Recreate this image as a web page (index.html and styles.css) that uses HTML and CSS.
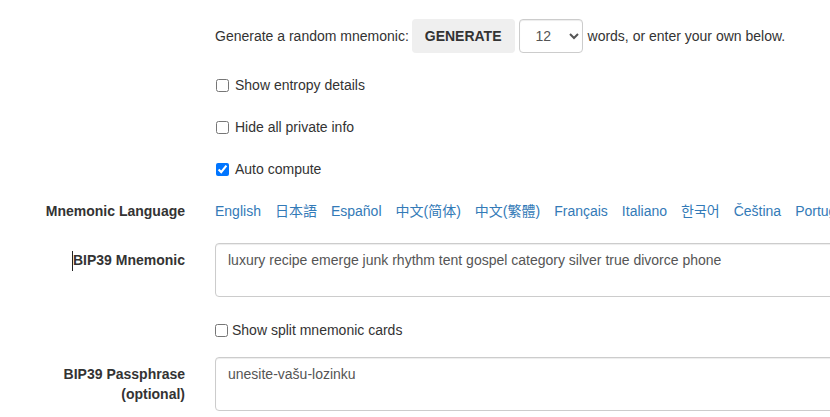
FILE: index.html
```html
<!DOCTYPE html>
<html lang="en">
<head>
<meta charset="utf-8">
<title>BIP39</title>
<link rel="stylesheet" href="styles.css">
</head>
<body>
<div class="form">
  <div class="row">
    <div class="label-col"></div>
    <div class="ctrl-col generate-line">
      <span>Generate a random mnemonic:</span>
      <button class="btn-generate">GENERATE</button>
      <select class="strength">
        <option>3</option><option>6</option><option>9</option><option selected>12</option><option>15</option><option>18</option><option>21</option><option>24</option>
      </select>
      <span class="after-select">words, or enter your own below.</span>
    </div>
  </div>
  <div class="row">
    <div class="label-col"></div>
    <div class="ctrl-col checkbox">
      <label><input type="checkbox">Show entropy details</label>
    </div>
  </div>
  <div class="row">
    <div class="label-col"></div>
    <div class="ctrl-col checkbox">
      <label><input type="checkbox">Hide all private info</label>
    </div>
  </div>
  <div class="row">
    <div class="label-col"></div>
    <div class="ctrl-col checkbox">
      <label><input type="checkbox" checked>Auto compute</label>
    </div>
  </div>
  <div class="row">
    <div class="label-col">Mnemonic Language</div>
    <div class="ctrl-col languages">
      <a href="#english">English</a>
      <a href="#japanese">日本語</a>
      <a href="#spanish">Español</a>
      <a href="#chinese_simplified">中文(简体)</a>
      <a href="#chinese_traditional">中文(繁體)</a>
      <a href="#french">Français</a>
      <a href="#italian">Italiano</a>
      <a href="#korean">한국어</a>
      <a href="#czech">Čeština</a>
      <a href="#portuguese">Português</a>
    </div>
  </div>
  <div class="row">
    <div class="label-col cursor-host"><span class="ibeam"></span>BIP39 Mnemonic</div>
    <div class="ctrl-col">
      <textarea class="field" rows="2">luxury recipe emerge junk rhythm tent gospel category silver true divorce phone</textarea>
    </div>
  </div>
  <div class="row split-row">
    <div class="label-col"></div>
    <div class="ctrl-col split">
      <label><input type="checkbox"> Show split mnemonic cards</label>
    </div>
  </div>
  <div class="row">
    <div class="label-col">BIP39 Passphrase<br>(optional)</div>
    <div class="ctrl-col">
      <textarea class="field" rows="2">unesite-vašu-lozinku</textarea>
    </div>
  </div>
</div>
</body>
</html>
```

FILE: styles.css
```css
html, body {
  margin: 0;
  padding: 0;
  overflow: hidden;
  background: #fff;
}
body {
  font-family: "Liberation Sans", Arial, "Noto Sans CJK SC", "Noto Sans CJK KR", sans-serif;
  font-size: 14px;
  line-height: 20px;
  color: #333;
}
.form {
  padding-top: 19px;
  width: 1200px;
}
.row {
  display: flex;
  margin-bottom: 15px;
}
.label-col {
  flex: none;
  width: 200px;
  box-sizing: border-box;
  padding: 7px 15px 0 0;
  text-align: right;
  font-weight: bold;
}
.ctrl-col {
  flex: none;
  width: 985px;
  box-sizing: border-box;
  padding-left: 15px;
}
.generate-line {
  display: flex;
  align-items: center;
  gap: 3px;
  height: 34px;
}
.btn-generate {
  height: 34px;
  box-sizing: border-box;
  margin: 0;
  padding: 6px 12px;
  border: 1px solid transparent;
  border-radius: 4px;
  background: #efefef;
  color: #333;
  font-family: inherit;
  font-size: 14px;
  font-weight: bold;
  line-height: 20px;
}
.strength {
  width: 64px;
  height: 34px;
  box-sizing: border-box;
  margin-left: 1px;
  padding: 6px 8px 6px 12px;
  border: 1px solid #ccc;
  border-radius: 4px;
  background: #fff;
  color: #555;
  font-family: inherit;
  font-size: 14px;
  box-shadow: inset 0 1px 1px rgba(0,0,0,.075);
}
.after-select {
  margin-left: 2px;
}
.checkbox {
  padding-top: 7px;
  min-height: 27px;
}
.checkbox label {
  position: relative;
  display: block;
  padding-left: 20px;
  line-height: 20px;
}
.checkbox input {
  position: absolute;
  left: 1px;
  top: 0;
  margin: 4px 0 0;
}
.languages {
  display: flex;
  gap: 14px;
  padding-top: 7px;
  padding-bottom: 7px;
  white-space: nowrap;
}
.languages a {
  color: #337ab7;
  text-decoration: none;
}
.field {
  display: block;
  width: 100%;
  height: 54px;
  box-sizing: border-box;
  margin: 0;
  padding: 6px 12px;
  border: 1px solid #ccc;
  border-radius: 4px;
  box-shadow: inset 0 1px 1px rgba(0,0,0,.075);
  font-family: inherit;
  font-size: 14px;
  line-height: 20px;
  color: #555;
  resize: vertical;
}
.split-row {
  min-height: 30px;
}
.split {
  padding-top: 8px;
}
.split label {
  display: inline-flex;
  align-items: center;
  line-height: 20px;
}
.split input {
  margin: 1px 4px 0 0;
}
.cursor-host {
  position: relative;
}
.ibeam {
  position: absolute;
  left: 72px;
  top: 8px;
  width: 1px;
  height: 20px;
  background: #222;
}
```
